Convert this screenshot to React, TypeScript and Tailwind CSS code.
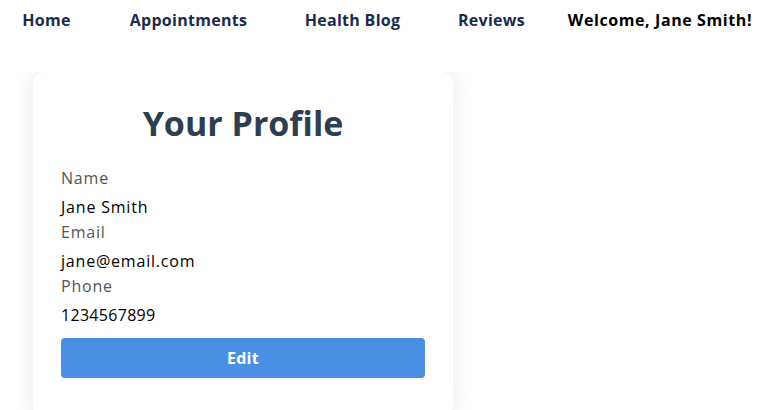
const links = [
  { label: 'Home', w: 'w-[93px]' },
  { label: 'Appointments', w: 'w-[191px]' },
  { label: 'Health Blog', w: 'w-[137px]' },
  { label: 'Reviews', w: 'w-[141px]' },
];

const fields = [
  { label: 'Name', value: 'Jane Smith' },
  { label: 'Email', value: 'jane@email.com' },
  { label: 'Phone', value: '1234567899' },
];

export default function App() {
  return (
    <div className="min-h-screen bg-white font-['Open_Sans',sans-serif]">
      <nav className="relative z-10 flex h-[72px] items-start bg-white pt-[8px]">
        {links.map((l) => (
          <a key={l.label} className={`${l.w} text-center text-[16px] font-bold leading-[24px] tracking-[0.3px] text-[#1a2b4c]`}>
            {l.label}
          </a>
        ))}
        <span className="w-[196px] text-center text-[16px] font-bold leading-[24px] tracking-[0.6px] text-black">
          Welcome, Jane Smith!
        </span>
      </nav>
      <div className="ml-[33px] w-[420px] rounded-[12px] bg-white px-[28px] pt-[28px] pb-[40px] shadow-[0_0_20px_rgba(0,0,0,0.09)]">
        <h2 className="text-center text-[34px] font-bold leading-[46px] text-[#2c3e50]">Your Profile</h2>
        <div className="mt-[20px] tracking-[0.8px]">
          {fields.map((f) => (
            <div key={f.label}>
              <div className="mb-[5px] text-[16px] leading-[24px] text-[#555]">{f.label}</div>
              <div className={`text-[16px] leading-[25px] text-black ${f.label === 'Phone' ? 'tracking-[0.3px]' : ''}`}>{f.value}</div>
            </div>
          ))}
        </div>
        <button className="mt-[10px] h-[40px] w-full rounded-[4px] bg-[#4a90e2] text-[16px] font-bold tracking-[0.3px] text-white">
          Edit
        </button>
      </div>
    </div>
  );
}
